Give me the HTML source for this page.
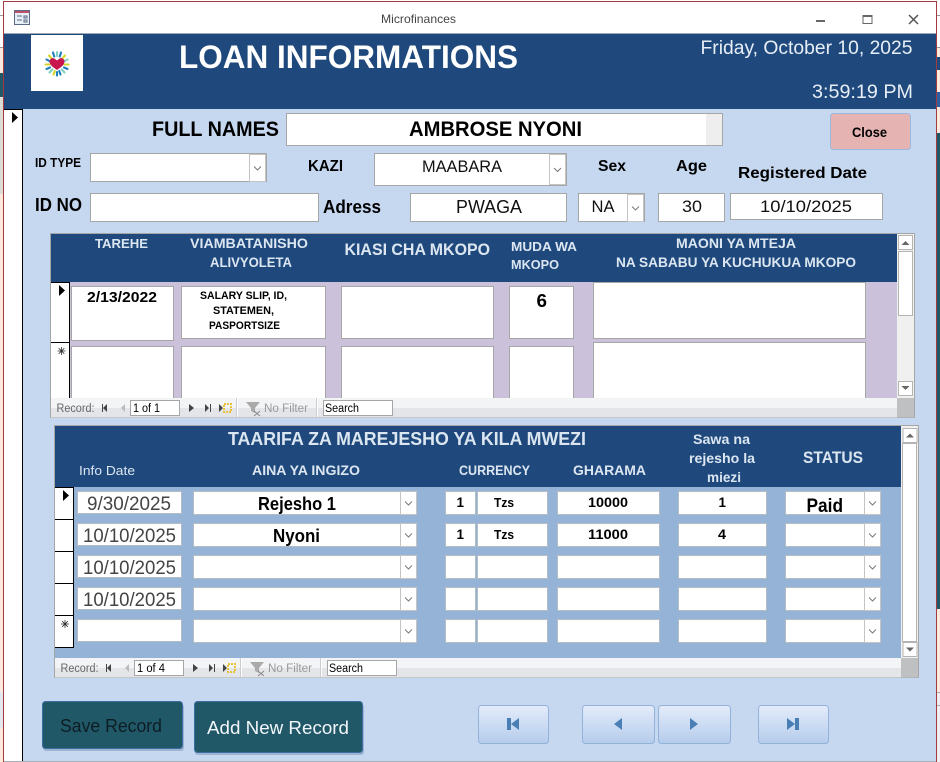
<!DOCTYPE html>
<html>
<head>
<meta charset="utf-8">
<title>Microfinances</title>
<style>
html,body{margin:0;padding:0;width:940px;height:762px;overflow:hidden;background:#fff}
svg{display:block}
text{font-family:"Liberation Sans",Arial,sans-serif}
.b{font-weight:bold}
.f{fill:#fff;stroke:#a6a6a6;stroke-width:1}
.f2{fill:#fff;stroke:#b4bcc6;stroke-width:1}
.h{fill:#dce6f1;font-weight:bold}
.k{fill:#000;font-weight:bold}
.n{fill:#666;font-size:11.5px}
</style>
</head>
<body>
<svg xmlns="http://www.w3.org/2000/svg" width="940" height="762" viewBox="0 0 940 762">
<defs>
<linearGradient id="g" x1="0" y1="0" x2="0" y2="1"><stop offset="0" stop-color="#e4ecfa"/><stop offset="1" stop-color="#b5ccec"/></linearGradient>
<g id="dd"><rect x=".5" y=".5" width="16" height="23" fill="#fff" stroke="#c4c4c4"/><polyline points="5,10.5 8.5,14 12,10.5" fill="none" stroke="#7a7a7a" stroke-width="1"/></g>
<g id="dt"><rect x=".5" y=".5" width="16" height="27" fill="#fff" stroke="#c4c4c4"/><polyline points="5,12.5 8.5,16 12,12.5" fill="none" stroke="#7a7a7a" stroke-width="1"/></g>
<g id="nav">
<polygon points="107,404 107,412 103,408" fill="#444"/><rect x="102" y="404" width="1" height="8" fill="#444"/>
<polygon points="125,404 125,412 121,408" fill="#bbb"/>
<rect x="130.500" y="400.500" width="49" height="15" fill="#fff" stroke="#a6a6a6"/>
<polygon points="189,404 189,412 194,408" fill="#444"/>
<polygon points="205,404 205,412 209,408" fill="#444"/><rect x="210" y="404" width="1" height="8" fill="#444"/>
<polygon points="219,404 219,412 223,408" fill="#444"/>
<rect x="224" y="404" width="7" height="8" fill="none" stroke="#e8c23a" stroke-width="2" stroke-dasharray="2 1"/>
<rect x="237" y="398" width="1" height="19" fill="#fff"/><rect x="236" y="398" width="1" height="19" fill="#ccc"/>
<polygon points="246,402 260,402 255,408 255,413 251,411 251,408" fill="#aaa"/>
<path d="M254 411l6 5M260 411l-6 5" stroke="#888" stroke-width="1" fill="none"/>
<rect x="317" y="398" width="1" height="19" fill="#fff"/><rect x="316" y="398" width="1" height="19" fill="#ccc"/>
<rect x="323.500" y="400.500" width="69" height="15" fill="#fff" stroke="#a6a6a6"/>
</g>
<g id="sb"><rect x=".5" y=".5" width="14" height="14" fill="#fff" stroke="#b4b4b4"/></g>
</defs>

<!-- background strips -->
<rect x="0" y="0" width="940" height="762" fill="#fff"/>
<rect x="0" y="47" width="3" height="715" fill="#fdeadd"/>
<rect x="0" y="15" width="3" height="1" fill="#999"/>
<rect x="0" y="47" width="3" height="1" fill="#999"/>
<rect x="0" y="73" width="3" height="24" fill="#215868"/>
<rect x="0" y="98" width="3" height="96" fill="#dcdcd6"/>
<rect x="0" y="692" width="3" height="36" fill="#e6e6f0"/>
<rect x="0" y="728" width="3" height="34" fill="#fdeadd"/>
<rect x="937" y="15" width="3" height="1" fill="#999"/>
<rect x="937" y="47" width="3" height="86" fill="#fdeadd"/>
<rect x="937" y="47" width="3" height="1" fill="#999"/>
<rect x="937" y="57" width="3" height="13" fill="#1f497d"/>
<rect x="937" y="92" width="3" height="15" fill="#2f5f9f"/>
<rect x="937" y="133" width="3" height="476" fill="#215868"/>
<rect x="937" y="609" width="3" height="83" fill="#fdeadd"/>
<rect x="937" y="692" width="3" height="70" fill="#f0f0f0"/>
<rect x="937" y="692" width="3" height="1" fill="#aaa"/>
<rect x="937" y="705" width="3" height="1" fill="#aaa"/>

<!-- window -->
<rect x="3.500" y="1.500" width="933" height="761" fill="#fff" stroke="#a33a3f"/>
<rect x="4" y="33" width="932" height="1" fill="#a0a8b4"/>
<rect x="4" y="34" width="932" height="75" fill="#1f497d"/>
<rect x="4" y="109" width="932" height="652" fill="#c6d8f0"/>
<rect x="4" y="761" width="932" height="1" fill="#a8b0bc"/>

<!-- title icon -->
<rect x="14.500" y="10.500" width="15" height="14" fill="#e8eef6" stroke="#5a6a88"/>
<rect x="15" y="11" width="14" height="2" fill="#c0506a"/>
<path d="M17 16h5M17 20h5M24 16h3v2h-3zM24 20h3v2h-3z" stroke="#5a6a88" fill="none"/>
<text x="381" y="23" font-size="12" fill="#444" textLength="75" lengthAdjust="spacingAndGlyphs">Microfinances</text>
<!-- window controls -->
<rect x="816" y="20" width="9" height="2" fill="#666"/>
<rect x="863" y="15.500" width="9" height="8" fill="none" stroke="#666"/><rect x="863" y="15" width="9" height="2" fill="#666"/>
<path d="M909 15l9 9M918 15l-9 9" stroke="#555" stroke-width="1.500" fill="none"/>

<!-- logo -->
<rect x="31" y="35" width="52" height="56" fill="#fff"/>
<g stroke-width="2.100" stroke-linecap="round" fill="none">
<path d="M57 52v4" stroke="#7fd0c0"/><path d="M53 52.500l1.300 4" stroke="#1f7fc0"/><path d="M61 52.500l-1.300 4" stroke="#1f7fc0"/>
<path d="M49 55.500l2.800 3" stroke="#d4d82a"/><path d="M65 55.500l-2.800 3" stroke="#d4d82a"/>
<path d="M46.500 59.500l3.500 1.800" stroke="#1f7fc0"/><path d="M67.500 59.500l-3.500 1.800" stroke="#7fd0c0"/>
<path d="M45.500 64.500h4" stroke="#d4d82a"/><path d="M68.500 64.500h-4" stroke="#d4d82a"/>
<path d="M46.500 69l3.500-1.500" stroke="#1f7fc0"/><path d="M67.500 69l-3.500-1.500" stroke="#1f7fc0"/>
<path d="M49.500 72.500l2.800-3" stroke="#7fd0c0"/><path d="M64.500 72.500l-2.800-3" stroke="#7fd0c0"/>
<path d="M53.500 74.500l1.300-3.500" stroke="#d4d82a"/><path d="M60.500 74.500l-1.300-3.500" stroke="#1f7fc0"/>
<path d="M57 75.500v-3.500" stroke="#1f7fc0"/>
</g>
<path d="M57 70c-3-2.300-7.500-4.600-7.500-8.500 0-2.800 3.300-4.200 5.200-2.800 1 .6 1.800 1.300 2.300 1.800.5-.5 1.300-1.200 2.300-1.800 1.900-1.400 5.200 0 5.200 2.800 0 3.900-4.500 6.200-7.500 8.500z" fill="#c8174f"/>

<!-- header text -->
<text x="179" y="68" font-size="32" class="b" fill="#fff" textLength="339" lengthAdjust="spacingAndGlyphs">LOAN INFORMATIONS</text>
<text x="700.500" y="54" font-size="19" fill="#e8eef6" textLength="212" lengthAdjust="spacingAndGlyphs">Friday, October 10, 2025</text>
<text x="812" y="98" font-size="19" fill="#e8eef6" textLength="101" lengthAdjust="spacingAndGlyphs">3:59:19 PM</text>

<!-- record selector -->
<rect x="4" y="109" width="18" height="652" fill="#fff"/>
<rect x="4" y="109" width="19" height="1" fill="#000"/>
<rect x="22" y="109" width="1" height="652" fill="#000"/>
<polygon points="12,112 18,117.500 12,123" fill="#000"/>

<!-- top form -->
<text x="152" y="136" font-size="21" class="k" textLength="127" lengthAdjust="spacingAndGlyphs">FULL NAMES</text>
<rect x="286.500" y="113.500" width="436" height="32" class="f"/>
<rect x="706" y="114" width="16" height="31" fill="#eee"/>
<text x="409" y="136" font-size="21" class="k" textLength="173" lengthAdjust="spacingAndGlyphs">AMBROSE NYONI</text>
<rect x="830.500" y="113.500" width="80" height="36" rx="3" fill="#e6b3b3" stroke="#9ab7dc"/>
<text x="852" y="137" font-size="14" class="k" textLength="35" lengthAdjust="spacingAndGlyphs">Close</text>

<text x="35" y="167" font-size="12.500" class="k" textLength="46" lengthAdjust="spacingAndGlyphs">ID TYPE</text>
<rect x="90.500" y="153.500" width="176" height="28" class="f"/>
<use href="#dt" x="249" y="154"/>
<text x="308" y="171" font-size="16" class="k" textLength="35" lengthAdjust="spacingAndGlyphs">KAZI</text>
<rect x="374.500" y="153.500" width="192" height="32" class="f"/>
<rect x="549.500" y="154.500" width="16" height="30" fill="#fff" stroke="#c4c4c4"/><polyline points="554,168 557.500,171.500 561,168" fill="none" stroke="#7a7a7a"/>
<text x="422" y="172" font-size="17" fill="#111" textLength="80" lengthAdjust="spacingAndGlyphs">MAABARA</text>
<text x="598" y="171" font-size="16" class="k" textLength="28" lengthAdjust="spacingAndGlyphs">Sex</text>
<text x="676" y="171" font-size="16" class="k" textLength="31" lengthAdjust="spacingAndGlyphs">Age</text>
<text x="738" y="178" font-size="16" class="k" textLength="129" lengthAdjust="spacingAndGlyphs">Registered Date</text>

<text x="35" y="211" font-size="18" class="k" textLength="47" lengthAdjust="spacingAndGlyphs">ID NO</text>
<rect x="90.500" y="193.500" width="228" height="28" class="f"/>
<text x="323" y="213" font-size="18" class="k" textLength="58" lengthAdjust="spacingAndGlyphs">Adress</text>
<rect x="410.500" y="193.500" width="156" height="28" class="f"/>
<text x="456" y="213" font-size="18" fill="#111" textLength="66" lengthAdjust="spacingAndGlyphs">PWAGA</text>
<rect x="578.500" y="193.500" width="66" height="28" class="f"/>
<use href="#dt" x="627" y="194"/>
<text x="591.500" y="212" font-size="17" fill="#111" textLength="23" lengthAdjust="spacingAndGlyphs">NA</text>
<rect x="658.500" y="193.500" width="66" height="28" class="f"/>
<text x="682" y="212" font-size="17" fill="#111" textLength="20" lengthAdjust="spacingAndGlyphs">30</text>
<rect x="730.500" y="193.500" width="152" height="26" class="f"/>
<text x="760" y="212" font-size="17" fill="#111" textLength="92" lengthAdjust="spacingAndGlyphs">10/10/2025</text>

<!-- subform 1 -->
<rect x="50.500" y="233.500" width="864" height="184" fill="#f0f0f0" stroke="#a6a6a6"/>
<rect x="51" y="234" width="846" height="48" fill="#1f497d"/>
<rect x="51" y="282" width="846" height="116" fill="#ccc1da"/>
<rect x="51" y="282" width="18" height="116" fill="#fff"/>
<rect x="51" y="282" width="19" height="1" fill="#000"/>
<rect x="51" y="342" width="19" height="1" fill="#000"/>
<rect x="69" y="282" width="1" height="116" fill="#000"/>
<polygon points="59,285 65,290.500 59,296" fill="#000"/>
<path d="M61.500 347v8M57.500 351h8M58.700 348.200l5.600 5.600M64.300 348.200l-5.600 5.600" stroke="#333" stroke-width=".8" fill="none"/>

<text x="95" y="248" font-size="13" class="h" textLength="53" lengthAdjust="spacingAndGlyphs">TAREHE</text>
<text x="190" y="248" font-size="13.500" class="h" textLength="118" lengthAdjust="spacingAndGlyphs">VIAMBATANISHO</text>
<text x="210" y="267" font-size="13.500" class="h" textLength="82" lengthAdjust="spacingAndGlyphs">ALIVYOLETA</text>
<text x="344.500" y="255" font-size="17" class="h" textLength="145.500" lengthAdjust="spacingAndGlyphs">KIASI CHA MKOPO</text>
<text x="511" y="251" font-size="13" class="h" textLength="66" lengthAdjust="spacingAndGlyphs">MUDA WA</text>
<text x="511" y="269" font-size="13" class="h" textLength="48" lengthAdjust="spacingAndGlyphs">MKOPO</text>
<text x="676" y="248" font-size="13.500" class="h" textLength="120" lengthAdjust="spacingAndGlyphs">MAONI YA MTEJA</text>
<text x="616" y="267" font-size="13.500" class="h" textLength="240" lengthAdjust="spacingAndGlyphs">NA SABABU YA KUCHUKUA MKOPO</text>

<rect x="71.500" y="286.500" width="102" height="54" class="f"/>
<rect x="181.500" y="286.500" width="144" height="52" class="f"/>
<rect x="341.500" y="286.500" width="152" height="52" class="f"/>
<rect x="509.500" y="286.500" width="64" height="52" class="f"/>
<rect x="593.500" y="282.500" width="272" height="56" class="f"/>
<rect x="71.500" y="346.500" width="102" height="56" class="f"/>
<rect x="181.500" y="346.500" width="144" height="56" class="f"/>
<rect x="341.500" y="346.500" width="152" height="56" class="f"/>
<rect x="509.500" y="346.500" width="64" height="56" class="f"/>
<rect x="593.500" y="342.500" width="272" height="60" class="f"/>

<text x="87" y="302" font-size="14.500" class="k" textLength="70" lengthAdjust="spacingAndGlyphs">2/13/2022</text>
<text x="200" y="299" font-size="11" class="k" textLength="87" lengthAdjust="spacingAndGlyphs">SALARY SLIP, ID,</text>
<text x="213" y="314" font-size="11" class="k" textLength="61" lengthAdjust="spacingAndGlyphs">STATEMEN,</text>
<text x="209" y="329" font-size="11" class="k" textLength="71" lengthAdjust="spacingAndGlyphs">PASPORTSIZE</text>
<text x="536.500" y="307" font-size="18" class="k" textLength="10.500" lengthAdjust="spacingAndGlyphs">6</text>

<!-- subform 1 nav -->
<rect x="51" y="398" width="846" height="10" fill="#f3f4f6"/>
<rect x="51" y="408" width="846" height="9.500" fill="#e4e5e9"/>
<use href="#nav"/>
<text x="56.500" y="412" class="n" textLength="38" lengthAdjust="spacingAndGlyphs">Record:</text>
<text x="133" y="412" font-size="11.500" fill="#000" textLength="27" lengthAdjust="spacingAndGlyphs">1 of 1</text>
<text x="264" y="412" font-size="11.500" fill="#999" textLength="44" lengthAdjust="spacingAndGlyphs">No Filter</text>
<text x="325" y="412" font-size="11.500" fill="#000" textLength="34" lengthAdjust="spacingAndGlyphs">Search</text>

<!-- subform 1 scrollbar -->
<rect x="897" y="234" width="17" height="164" fill="#f0f0f0"/>
<use href="#sb" x="898" y="235"/><polygon points="901.500,245 905.500,241 909.500,245" fill="#666"/>
<rect x="898.500" y="251.500" width="14" height="64" fill="#fff" stroke="#b4b4b4"/>
<use href="#sb" x="898" y="381"/><polygon points="901.500,386 909.500,386 905.500,390" fill="#666"/>
<rect x="897" y="398" width="17" height="19.500" fill="#bfc0c2"/>

<!-- subform 2 -->
<rect x="54.500" y="425.500" width="864" height="252" fill="#f0f0f0" stroke="#a6a6a6"/>
<rect x="55" y="426" width="846" height="61" fill="#1f497d"/>
<rect x="55" y="487" width="846" height="171" fill="#95b3d7"/>
<rect x="55" y="487" width="18" height="160" fill="#fff"/>
<path d="M55 487.500h19M55 519.500h19M55 551.500h19M55 583.500h19M55 615.500h19M55 647.500h19M73.500 487v161" stroke="#000" fill="none"/>
<polygon points="63,490 69,495.500 63,501" fill="#000"/>
<path d="M65 620v8M61 624h8M62.200 621.200l5.600 5.600M67.800 621.200l-5.600 5.600" stroke="#333" stroke-width=".8" fill="none"/>

<text x="228" y="445" font-size="18" class="h" textLength="358" lengthAdjust="spacingAndGlyphs">TAARIFA ZA MAREJESHO YA KILA MWEZI</text>
<text x="79" y="475" font-size="13" fill="#dce6f1" textLength="56" lengthAdjust="spacingAndGlyphs">Info Date</text>
<text x="252" y="475" font-size="13.500" class="h" textLength="108" lengthAdjust="spacingAndGlyphs">AINA YA INGIZO</text>
<text x="459" y="475" font-size="13.500" class="h" textLength="71" lengthAdjust="spacingAndGlyphs">CURRENCY</text>
<text x="573" y="475" font-size="13.500" class="h" textLength="73" lengthAdjust="spacingAndGlyphs">GHARAMA</text>
<text x="693" y="444" font-size="13.500" class="h" textLength="57" lengthAdjust="spacingAndGlyphs">Sawa na</text>
<text x="689" y="463" font-size="13.500" class="h" textLength="66" lengthAdjust="spacingAndGlyphs">rejesho la</text>
<text x="707" y="482" font-size="13.500" class="h" textLength="34" lengthAdjust="spacingAndGlyphs">miezi</text>
<text x="803" y="463" font-size="17" class="h" textLength="60" lengthAdjust="spacingAndGlyphs">STATUS</text>

<!-- rows -->
<g id="r1">
<rect x="77.500" y="491.500" width="104" height="22" class="f2"/>
<rect x="193.500" y="491.500" width="223" height="23" class="f2"/>
<rect x="445.500" y="491.500" width="30" height="23" class="f2"/>
<rect x="477.500" y="491.500" width="70" height="23" class="f2"/>
<rect x="557.500" y="491.500" width="102" height="23" class="f2"/>
<rect x="678.500" y="491.500" width="88" height="23" class="f2"/>
<rect x="785.500" y="491.500" width="95" height="23" class="f2"/>
<use href="#dd" x="400" y="491"/>
<use href="#dd" x="864" y="491"/>
</g>
<use href="#r1" y="32"/>
<use href="#r1" y="64"/>
<use href="#r1" y="96"/>
<use href="#r1" y="128"/>

<text x="87" y="510" font-size="19" fill="#444" textLength="84" lengthAdjust="spacingAndGlyphs">9/30/2025</text>
<text x="83" y="542" font-size="19" fill="#444" textLength="93" lengthAdjust="spacingAndGlyphs">10/10/2025</text>
<text x="83" y="574" font-size="19" fill="#444" textLength="93" lengthAdjust="spacingAndGlyphs">10/10/2025</text>
<text x="83" y="606" font-size="19" fill="#444" textLength="93" lengthAdjust="spacingAndGlyphs">10/10/2025</text>
<text x="258" y="510" font-size="18" class="k" textLength="78" lengthAdjust="spacingAndGlyphs">Rejesho 1</text>
<text x="273" y="542" font-size="18" class="k" textLength="47" lengthAdjust="spacingAndGlyphs">Nyoni</text>
<text x="456.500" y="507" font-size="14" class="k" textLength="7.500" lengthAdjust="spacingAndGlyphs">1</text>
<text x="456.500" y="539" font-size="14" class="k" textLength="7.500" lengthAdjust="spacingAndGlyphs">1</text>
<text x="494" y="507" font-size="13" class="k" textLength="20" lengthAdjust="spacingAndGlyphs">Tzs</text>
<text x="494" y="539" font-size="13" class="k" textLength="20" lengthAdjust="spacingAndGlyphs">Tzs</text>
<text x="588" y="507" font-size="14" class="k" textLength="40" lengthAdjust="spacingAndGlyphs">10000</text>
<text x="588" y="539" font-size="14" class="k" textLength="40" lengthAdjust="spacingAndGlyphs">11000</text>
<text x="718.500" y="507" font-size="14" class="k" textLength="7.500" lengthAdjust="spacingAndGlyphs">1</text>
<text x="718" y="539" font-size="14" class="k" textLength="8" lengthAdjust="spacingAndGlyphs">4</text>
<text x="806.500" y="512" font-size="19" class="k" textLength="36.500" lengthAdjust="spacingAndGlyphs">Paid</text>

<!-- subform 2 nav -->
<rect x="55" y="658" width="846" height="10" fill="#f3f4f6"/>
<rect x="55" y="668" width="846" height="9.500" fill="#e4e5e9"/>
<use href="#nav" x="4" y="260"/>
<text x="60.500" y="672" class="n" textLength="38" lengthAdjust="spacingAndGlyphs">Record:</text>
<text x="137" y="672" font-size="11.500" fill="#000" textLength="28" lengthAdjust="spacingAndGlyphs">1 of 4</text>
<text x="268" y="672" font-size="11.500" fill="#999" textLength="44" lengthAdjust="spacingAndGlyphs">No Filter</text>
<text x="329" y="672" font-size="11.500" fill="#000" textLength="34" lengthAdjust="spacingAndGlyphs">Search</text>

<!-- subform 2 scrollbar -->
<rect x="901" y="426" width="17" height="232" fill="#f0f0f0"/>
<use href="#sb" x="902.500" y="428"/><polygon points="906,437.500 910,433.500 914,437.500" fill="#666"/>
<rect x="902.500" y="443.500" width="14" height="198" fill="#fff" stroke="#b4b4b4"/>
<use href="#sb" x="902.500" y="642"/><polygon points="906,647.500 914,647.500 910,651.500" fill="#666"/>
<rect x="901" y="658" width="17" height="19.500" fill="#bfc0c2"/>

<!-- bottom buttons -->
<rect x="43" y="704" width="141" height="47" rx="3" fill="#6f8aa8" opacity=".45"/>
<rect x="42.500" y="701.500" width="140" height="47" rx="3" fill="#215868" stroke="#3c6ea5"/>
<text x="60" y="732" font-size="18" fill="#0d1d24" textLength="102" lengthAdjust="spacingAndGlyphs">Save Record</text>
<rect x="195" y="704" width="169" height="51" rx="3" fill="#6f8aa8" opacity=".45"/>
<rect x="194.500" y="701.500" width="168" height="51" rx="3" fill="#215868" stroke="#3c6ea5"/>
<text x="207" y="734" font-size="18" fill="#f2f6fa" textLength="142" lengthAdjust="spacingAndGlyphs">Add New Record</text>

<rect x="478.500" y="705.500" width="70" height="38" rx="3" fill="url(#g)" stroke="#93b2da"/>
<rect x="507" y="718" width="4" height="12" fill="#4a7fb5"/><polygon points="519,718 519,730 511,724" fill="#4a7fb5"/>
<rect x="582.500" y="705.500" width="72" height="38" rx="3" fill="url(#g)" stroke="#93b2da"/>
<polygon points="622,718 622,730 614,724" fill="#4a7fb5"/>
<rect x="658.500" y="705.500" width="72" height="38" rx="3" fill="url(#g)" stroke="#93b2da"/>
<polygon points="690,718 690,730 698,724" fill="#4a7fb5"/>
<rect x="758.500" y="705.500" width="70" height="38" rx="3" fill="url(#g)" stroke="#93b2da"/>
<polygon points="787,718 787,730 795,724" fill="#4a7fb5"/><rect x="795" y="718" width="4" height="12" fill="#4a7fb5"/>
</svg>
</body>
</html>
